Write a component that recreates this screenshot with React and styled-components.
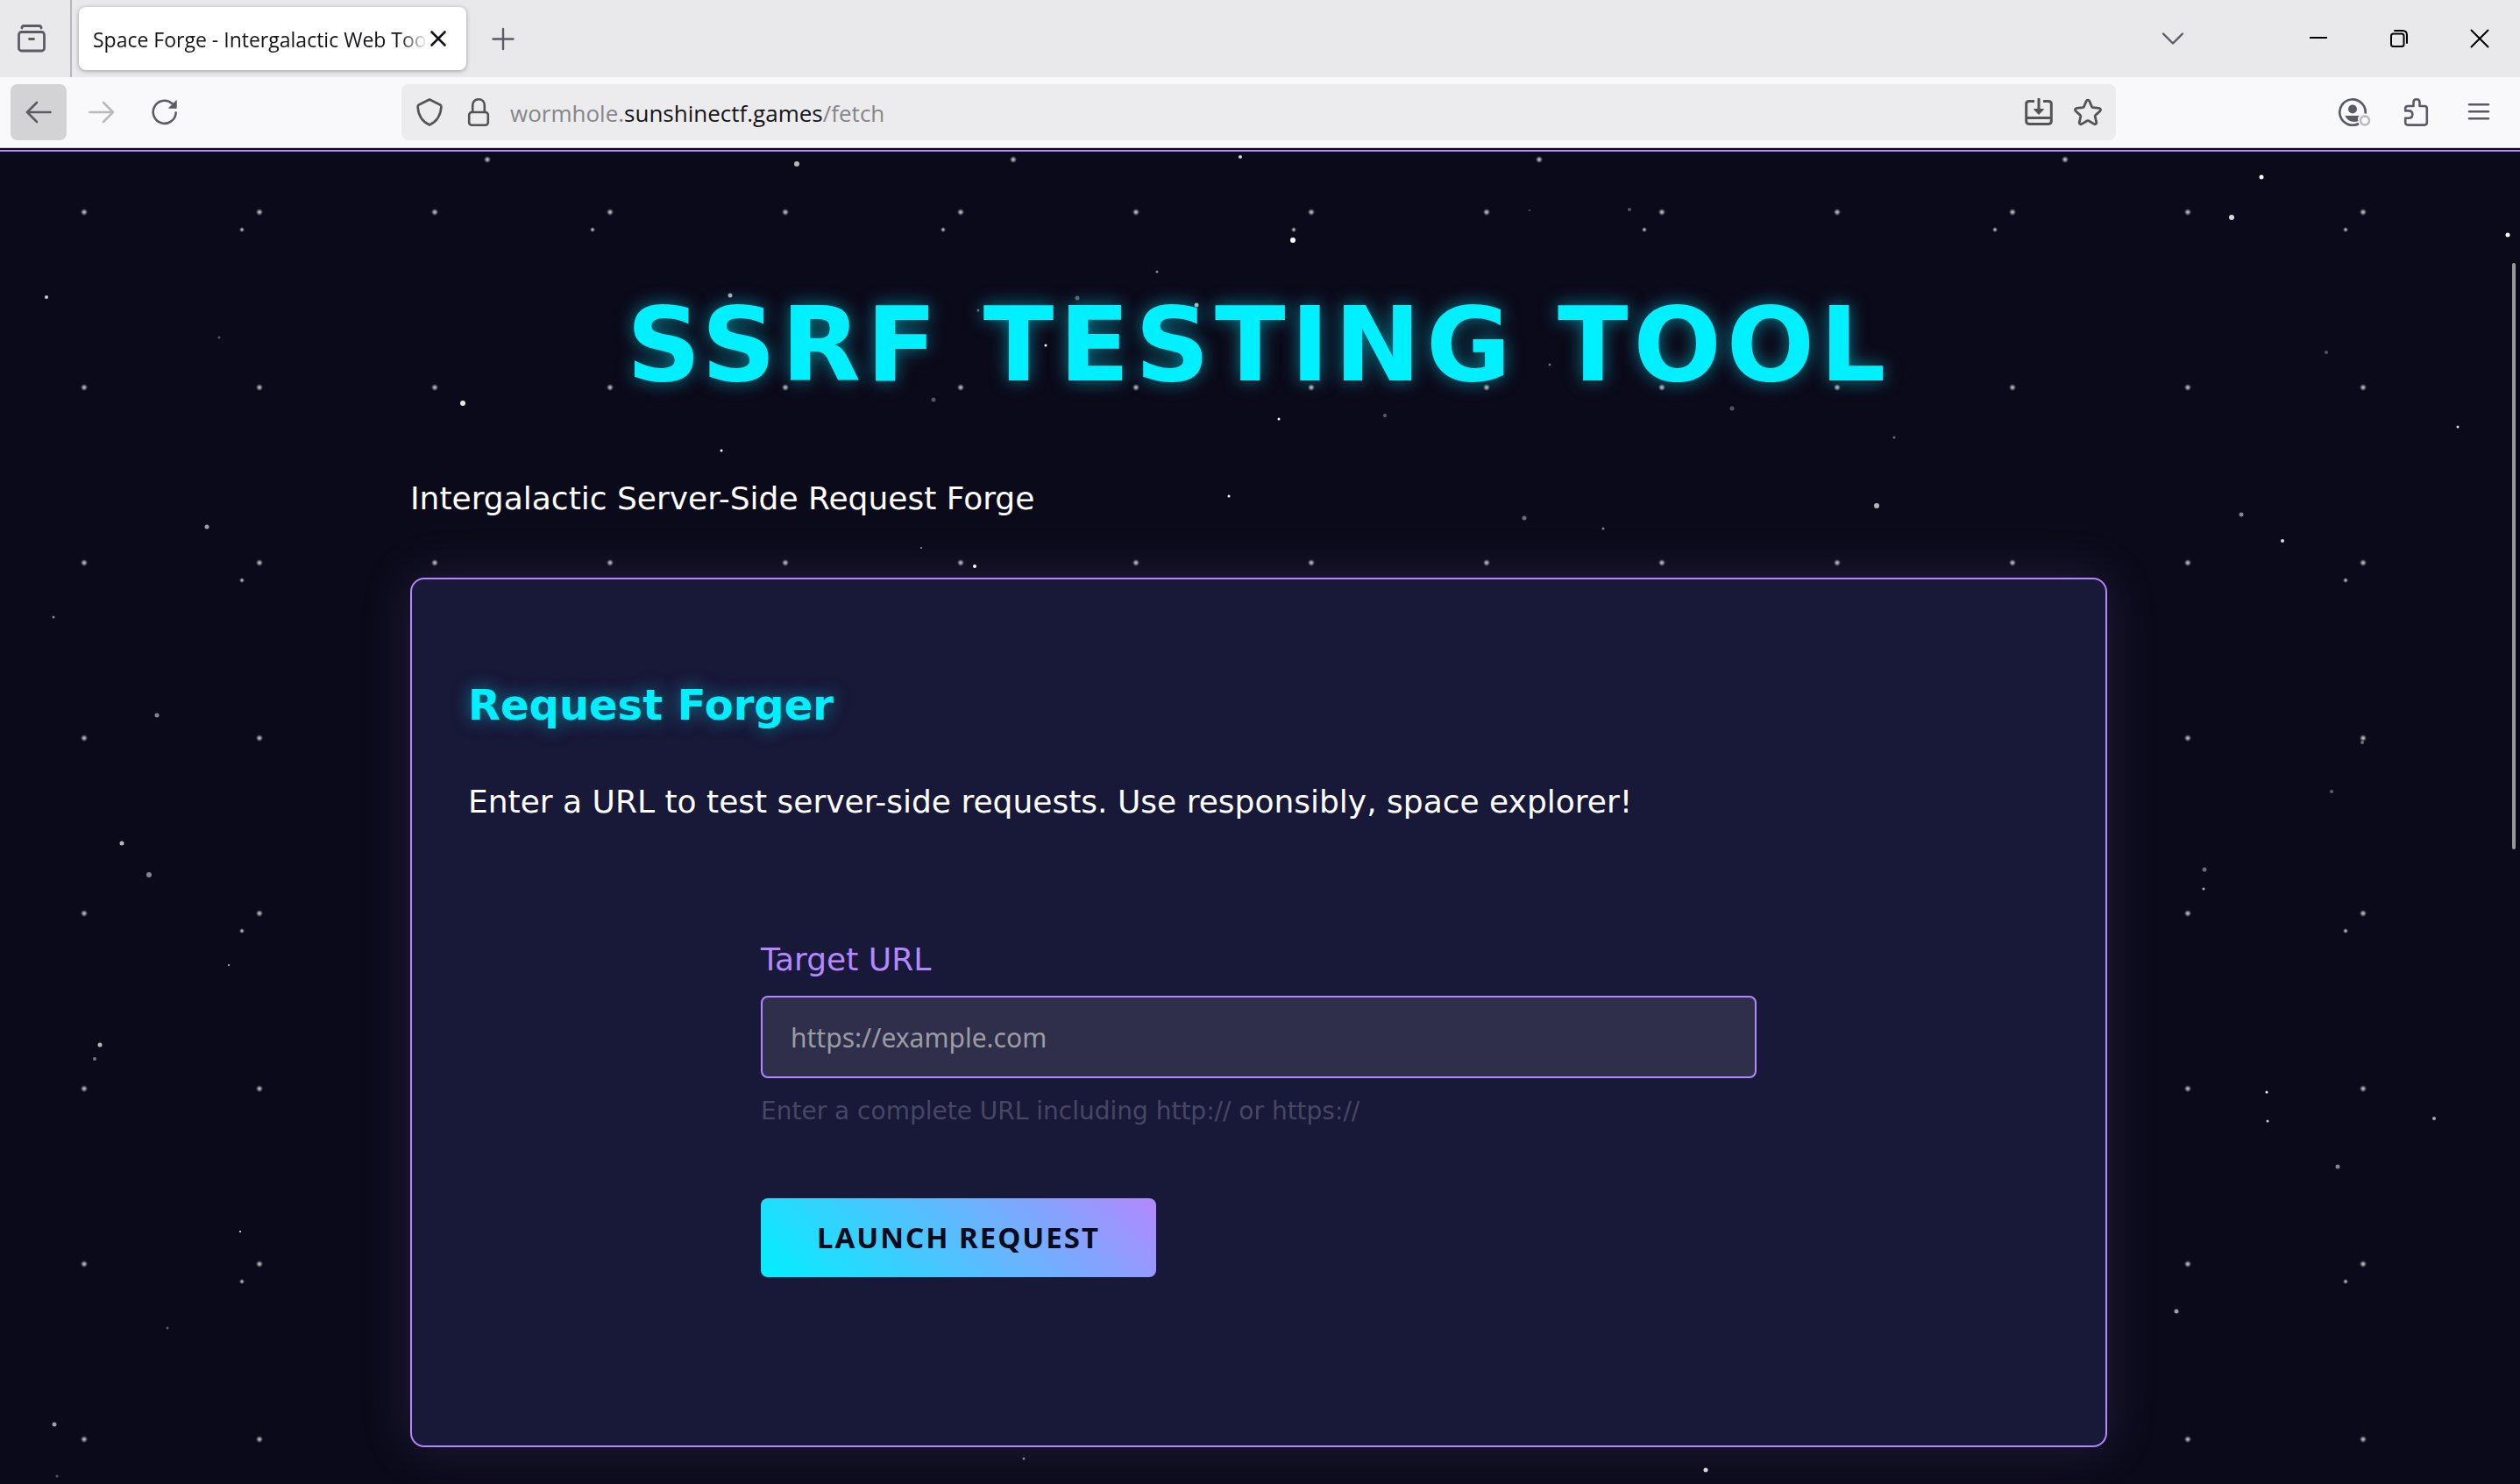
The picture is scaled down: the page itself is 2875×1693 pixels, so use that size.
import React from "react";
import styled, { createGlobalStyle, css } from "styled-components";

const display = '"DejaVu Sans", Verdana, sans-serif';
const ui = '"Open Sans", "Segoe UI", sans-serif';
const control = '"Noto Sans", Tahoma, sans-serif';

const cyan = "#00f0ff";
const violet = "#b388ff";
const night = "#0b0a1a";
const ink = "#15141a";

const GlobalStyle = createGlobalStyle`
  *, *::before, *::after { box-sizing: border-box; }
  body { margin: 0; background: ${night}; }
`;

const Shell = styled.div`
  display: flex;
  flex-direction: column;
  min-height: 100vh;
`;

/* ---------- browser chrome ---------- */

const TabStrip = styled.div`
  display: flex;
  align-items: center;
  height: 88px;
  background: #e9e9eb;
`;

const IconButton = styled.button`
  display: flex;
  align-items: center;
  justify-content: center;
  flex: none;
  width: ${(p) => p.$width || 64}px;
  height: 64px;
  margin: 0;
  padding: 0;
  border: 0;
  border-radius: 8px;
  background: ${(p) => (p.$active ? "#d3d3d5" : "transparent")};
  color: ${(p) => p.$color || "#5b5b66"};
  svg { display: block; flex: none; opacity: ${(p) => (p.disabled ? 0.4 : 1)}; }
`;

const ViewSlot = styled.div`
  display: flex;
  align-items: center;
  justify-content: center;
  align-self: stretch;
  width: 82px;
  padding-right: 8px;
  border-right: 2px solid #b7b7ba;
`;

const Tab = styled.div`
  display: flex;
  align-items: center;
  gap: 4px;
  width: 442px;
  height: 72px;
  margin: 0 10px 0 8px;
  padding: 0 24px 0 16px;
  border-radius: 8px;
  background: #fff;
  box-shadow: 0 1px 5px rgba(0, 0, 0, 0.35);
`;

const TabTitle = styled.span`
  flex: 1;
  padding-top: 2px;
  overflow: hidden;
  white-space: nowrap;
  font: 23px/36px ${ui};
  color: ${ink};
  mask-image: linear-gradient(to left, transparent, #000 32px);
`;

const Spacer = styled.div`
  flex: 1;
`;

const WindowButtons = styled.div`
  display: flex;
  margin-left: 88px;
`;

const Toolbar = styled.div`
  display: flex;
  align-items: center;
  gap: 8px;
  height: 81px;
  padding: 0 15px 0 12px;
  border-bottom: 1px solid #cccccf;
  background: #f9f9fb;
`;

const AddressBar = styled.div`
  display: flex;
  align-items: center;
  flex: 1;
  min-width: 0;
  height: 64px;
  margin: 0 230px;
  padding: 0 4px;
  border-radius: 8px;
  background: #ececee;
`;

const Address = styled.div`
  flex: 1;
  min-width: 0;
  padding: 2px 0 0 8px;
  overflow: hidden;
  white-space: nowrap;
  font: 26px/40px ${ui};
  color: #86868a;
  b { font-weight: 400; color: ${ink}; }
`;

/* ---------- page ---------- */

const Page = styled.div`
  position: relative;
  flex: 1;
  overflow: hidden;
  background-color: ${night};
  background-image:
    radial-gradient(circle 4px at 96px 73px, rgba(255, 255, 255, 0.85), transparent),
    radial-gradient(circle 3px at 276px 93px, rgba(255, 255, 255, 0.85), transparent),
    radial-gradient(circle 4px at 556px 13px, rgba(255, 255, 255, 0.85), transparent);
  background-size: 200px 200px, 400px 400px, 600px 600px;
`;

const NavEdge = styled.div`
  height: 4px;
  border-bottom: 2px solid ${violet};
`;

const Sky = styled.svg`
  position: absolute;
  inset: 0;
  width: 100%;
  height: 100%;
  pointer-events: none;
`;

const ScrollThumb = styled.div`
  position: absolute;
  top: 131px;
  right: 5px;
  width: 4px;
  height: 669px;
  border-radius: 2px;
  background: #9a9896;
`;

const Gutter = styled.div`
  padding-right: 3px;
`;

const Container = styled.main`
  position: relative;
  max-width: 2000px;
  margin: 0 auto;
  padding: 152px 32px 40px;
  font: 36px/52px ${display};
  color: #fff;
`;

const glow = css`
  color: ${cyan};
  text-shadow: 0 0 20px rgba(0, 240, 255, 0.5);
`;

const Title = styled.h1`
  ${glow}
  margin: 0 0 82px;
  font-size: 118px;
  line-height: 136px;
  font-weight: 700;
  letter-spacing: 6px;
  text-align: center;
  text-transform: uppercase;
`;

const Text = styled.p`
  margin: 0;
`;

const Card = styled.section`
  margin-top: 64px;
  padding: 114px 64px 64px;
  border: 2px solid ${violet};
  border-radius: 16px;
  background: #181838;
  box-shadow: 0 0 60px rgba(179, 136, 255, 0.15);
`;

const CardTitle = styled.h2`
  ${glow}
  margin: 0 0 56px;
  font-size: 48px;
  line-height: 58px;
  font-weight: 700;
`;

const Form = styled.form`
  display: flex;
  flex-direction: column;
  align-items: flex-start;
  max-width: 1136px;
  margin: 128px auto;
`;

const Label = styled.label`
  margin-bottom: 15px;
  color: ${violet};
`;

const Input = styled.input`
  width: 100%;
  height: 94px;
  padding: 0 32px;
  border: 2px solid ${violet};
  border-radius: 8px;
  background: rgba(255, 255, 255, 0.1);
  font: 30px/44px ${control};
  color: #fff;
  &::placeholder { color: #9c9ca3; opacity: 1; }
`;

const Hint = styled.small`
  margin: 16px 0 77px;
  font-size: 28px;
  line-height: 44px;
  color: #474763;
`;

const Launch = styled.button`
  height: 90px;
  padding: 0 64px;
  border: 0;
  border-radius: 8px;
  background: linear-gradient(45deg, ${cyan}, ${violet});
  font: 700 33px/44px ${control};
  letter-spacing: 2px;
  text-transform: uppercase;
  color: ${night};
`;

/* [x, y, diameter, opacity], measured from the top-left of the page area */
const stars = [
  [909, 18, 6, 0.7], [53, 170, 4, 0.8], [250, 216, 3, 0.3], [833, 168, 5, 0.65],
  [528, 291, 6, 0.9], [823, 345, 3, 1], [236, 432, 5, 0.6], [61, 535, 3, 0.5],
  [179, 647, 5, 0.5], [1415, 10, 4, 0.8], [1745, 71, 2, 0.35], [1859, 70, 4, 0.3],
  [1475, 105, 6, 1], [1320, 141, 3, 0.5], [1229, 171, 5, 0.35], [1365, 179, 5, 0.7],
  [1401, 187, 4, 0.4], [1116, 185, 3, 0.4], [1193, 225, 3, 1], [1689, 219, 2, 1],
  [1768, 247, 3, 0.4], [1065, 287, 5, 0.3], [1459, 309, 3, 1], [1580, 305, 4, 0.35],
  [1402, 397, 3, 1], [1739, 422, 5, 0.4], [1829, 434, 3, 0.5], [1051, 456, 2, 0.6],
  [1112, 477, 4, 1], [2580, 33, 5, 1], [2546, 79, 6, 0.85], [2861, 99, 5, 1],
  [2100, 195, 5, 1], [2654, 233, 4, 0.3], [1976, 297, 5, 0.3], [2161, 330, 3, 0.4],
  [2804, 318, 3, 0.85], [2141, 408, 6, 0.7], [2557, 418, 5, 0.5], [2604, 448, 4, 0.85],
  [2695, 678, 4, 0.4], [2660, 734, 4, 0.35], [139, 793, 5, 0.7], [170, 829, 6, 0.5],
  [261, 932, 2, 0.8], [114, 1023, 5, 0.7], [108, 1039, 4, 0.45], [274, 1236, 2, 1],
  [191, 1346, 3, 0.35], [62, 1456, 5, 0.6], [65, 1515, 3, 0.3], [2515, 823, 5, 0.4],
  [2514, 845, 3, 0.7], [2586, 1077, 3, 1], [2587, 1110, 3, 0.8], [2777, 1107, 4, 0.65],
  [2667, 1162, 5, 0.5], [2483, 1327, 5, 0.6], [1168, 1495, 3, 0.5], [1946, 1508, 5, 0.85],
];

/* ---------- icons ---------- */

const Icon = ({ size = 32, width = 2.6, cap = "round", children }) => (
  <svg
    width={size}
    height={size}
    viewBox="0 0 32 32"
    fill="none"
    stroke="currentColor"
    strokeWidth={width}
    strokeLinecap={cap}
    strokeLinejoin="round"
    aria-hidden="true"
  >
    {children}
  </svg>
);

const ViewIcon = () => (
  <Icon width={2.8}>
    <path d="M5 4v-.2C5 2.300 6 1.500 7.500 1.500h17C26 1.500 27 2.300 27 3.800V4" />
    <rect x="1.500" y="8.500" width="29" height="21.500" rx="3" />
    <path d="M13.500 16.500h5" />
  </Icon>
);
const CrossIcon = () => (
  <Icon width={2.6}><path d="M8.500 8.500l15 15M23.500 8.500l-15 15" /></Icon>
);
const CaptionCloseIcon = () => (
  <Icon width={2}><path d="M6.500 6.500l19 19M25.500 6.500l-19 19" /></Icon>
);
const PlusIcon = () => (
  <Icon width={2.4}><path d="M16 5v23M4.500 16.500h23" /></Icon>
);
const ChevronIcon = () => (
  <Icon width={2.4}><path d="M5 10.500l11 11 11-11" /></Icon>
);
const MinimizeIcon = () => (
  <Icon width={2} cap="butt"><path d="M6 15h20" /></Icon>
);
const RestoreIcon = () => (
  <Icon width={2}>
    <rect x="7" y="10.500" width="14.500" height="14.500" rx="2.500" />
    <path d="M11 7h9c3 0 5 2 5 5v9" />
  </Icon>
);
const BackIcon = () => (
  <Icon><path d="M29.500 16H3M14 5L3 16 14 27" /></Icon>
);
const ForwardIcon = () => (
  <Icon><path d="M2.500 16H29M18 5L29 16 18 27" /></Icon>
);
const ReloadIcon = () => (
  <Icon>
    <path d="M28.700 16.500A13 13 0 1 1 24.500 6.200" />
    <path d="M29.200 3v8.300h-8.300z" fill="currentColor" stroke="currentColor" strokeWidth="1" />
  </Icon>
);
const ShieldIcon = () => (
  <Icon>
    <path d="M16 1.500l12 6c1 .5 1.500 1.200 1.400 2.300C28.800 20 24.500 26.500 16 30.500 7.500 26.500 3.200 20 2.600 9.800 2.500 8.700 3 8 4 7.500z" />
  </Icon>
);
const LockIcon = () => (
  <Icon>
    <rect x="5.200" y="16" width="21.600" height="14.700" rx="3" />
    <path d="M9.200 16V8.500C9.200 4 12 1.300 16 1.300S22.800 4 22.800 8.500V16" />
  </Icon>
);
const InstallIcon = () => (
  <Icon width={3} cap="butt">
    <path d="M11 3.400H5C3 3.400 1.700 4.600 1.700 6.500v19.800c0 1.900 1.300 3.100 3.300 3.100h22c2 0 3.300-1.200 3.300-3.100V6.500c0-1.900-1.300-3.100-3.300-3.100h-6" />
    <path d="M2 22.500h28M16 0v14" />
    <path d="M11 12.800h10L16 18z" fill="currentColor" strokeWidth="1.500" />
  </Icon>
);
const StarIcon = () => (
  <Icon width={2.8}>
    <path d="M14.200 3.400c.8-1.700 2.800-1.700 3.600 0l2.700 6.400c.2.500.6.800 1.100.8l7 .7c1.900.2 2.500 2.200 1.200 3.400l-5.100 4.700c-.4.400-.6.900-.5 1.400l1.500 6.600c.4 1.700-1.300 2.900-2.800 2l-6.100-3.600c-.5-.3-1.100-.3-1.600 0l-6.100 3.600c-1.500.9-3.200-.3-2.800-2l1.500-6.600c.1-.5-.1-1-.5-1.400l-5.100-4.700c-1.300-1.200-.7-3.200 1.200-3.400l7-.7c.5 0 .9-.3 1.100-.8z" />
  </Icon>
);
const AccountIcon = () => (
  <svg width="44" height="32" viewBox="-6 0 44 32" fill="none" aria-hidden="true">
    <path d="M23 29A14.700 14.700 0 1 1 30.600 17.500" stroke="currentColor" strokeWidth="2.700" />
    <circle cx="16" cy="12.500" r="5" fill="currentColor" />
    <path d="M7.500 20h16c-1.600 2-1.800 4-1 6-5.500 2.200-12.500.5-15-6z" fill="currentColor" />
    <circle cx="30" cy="25.500" r="5" stroke="#b9b9be" strokeWidth="2.500" />
  </svg>
);
const PuzzleIcon = () => (
  <Icon>
    <path d="M7 9h6.500V5c0-2.200 1.300-3.700 3.500-3.700s3.500 1.500 3.500 3.700v4H26c1.800 0 2.800 1 2.800 2.800v16c0 1.800-1 2.800-2.800 2.800H7c-1.800 0-2.800-1-2.800-2.800v-5h3.800c2.700 0 4.300-1.700 4.300-4.200s-1.600-4.200-4.300-4.200H4.200v-2.600C4.200 10 5.200 9 7 9z" />
  </Icon>
);
const MenuIcon = () => (
  <Icon><path d="M5 7.200h22M5 15.200h22M5 23.200h22" /></Icon>
);

export default function App() {
  return (
    <Shell>
      <GlobalStyle />
      <TabStrip>
        <ViewSlot>
          <IconButton aria-label="View recent browsing"><ViewIcon /></IconButton>
        </ViewSlot>
        <Tab>
          <TabTitle>Space Forge - Intergalactic Web Too</TabTitle>
          <IconButton $width={16} $color={ink} aria-label="Close tab"><CrossIcon /></IconButton>
        </Tab>
        <IconButton aria-label="New tab"><PlusIcon /></IconButton>
        <Spacer />
        <IconButton aria-label="List all tabs"><ChevronIcon /></IconButton>
        <WindowButtons>
          <IconButton $width={92} $color="#000" aria-label="Minimize"><MinimizeIcon /></IconButton>
          <IconButton $width={92} $color="#000" aria-label="Restore"><RestoreIcon /></IconButton>
          <IconButton $width={92} $color="#000" aria-label="Close window"><CaptionCloseIcon /></IconButton>
        </WindowButtons>
      </TabStrip>
      <Toolbar>
        <IconButton $active aria-label="Back"><BackIcon /></IconButton>
        <IconButton disabled aria-label="Forward"><ForwardIcon /></IconButton>
        <IconButton aria-label="Reload"><ReloadIcon /></IconButton>
        <AddressBar>
          <IconButton $width={56} $color="#535358" aria-label="Tracking protection"><ShieldIcon /></IconButton>
          <IconButton $width={56} $color="#535358" aria-label="Site information"><LockIcon /></IconButton>
          <Address role="textbox" aria-label="Address">
            wormhole.<b>sunshinectf.games</b>/fetch
          </Address>
          <IconButton $width={56} $color="#535358" aria-label="Install page"><InstallIcon /></IconButton>
          <IconButton $width={56} $color="#535358" aria-label="Bookmark this page"><StarIcon /></IconButton>
        </AddressBar>
        <IconButton aria-label="Account"><AccountIcon /></IconButton>
        <IconButton aria-label="Extensions"><PuzzleIcon /></IconButton>
        <IconButton aria-label="Open menu"><MenuIcon /></IconButton>
      </Toolbar>
      <Page>
        <Sky aria-hidden="true">
          {stars.map(([x, y, d, o]) => (
            <circle key={`${x}-${y}`} cx={x} cy={y} r={d / 2} fill="#fff" opacity={o} />
          ))}
        </Sky>
        <NavEdge />
        <Gutter>
          <Container>
            <Title>SSRF Testing Tool</Title>
            <Text>Intergalactic Server-Side Request Forge</Text>
            <Card>
              <CardTitle>Request Forger</CardTitle>
              <Text>Enter a URL to test server-side requests. Use responsibly, space explorer!</Text>
              <Form onSubmit={(e) => e.preventDefault()}>
                <Label htmlFor="target-url">Target URL</Label>
                <Input id="target-url" type="url" placeholder="https://example.com" aria-describedby="url-hint" />
                <Hint id="url-hint">Enter a complete URL including http:// or https://</Hint>
                <Launch type="submit">Launch Request</Launch>
              </Form>
            </Card>
          </Container>
        </Gutter>
        <ScrollThumb />
      </Page>
    </Shell>
  );
}
